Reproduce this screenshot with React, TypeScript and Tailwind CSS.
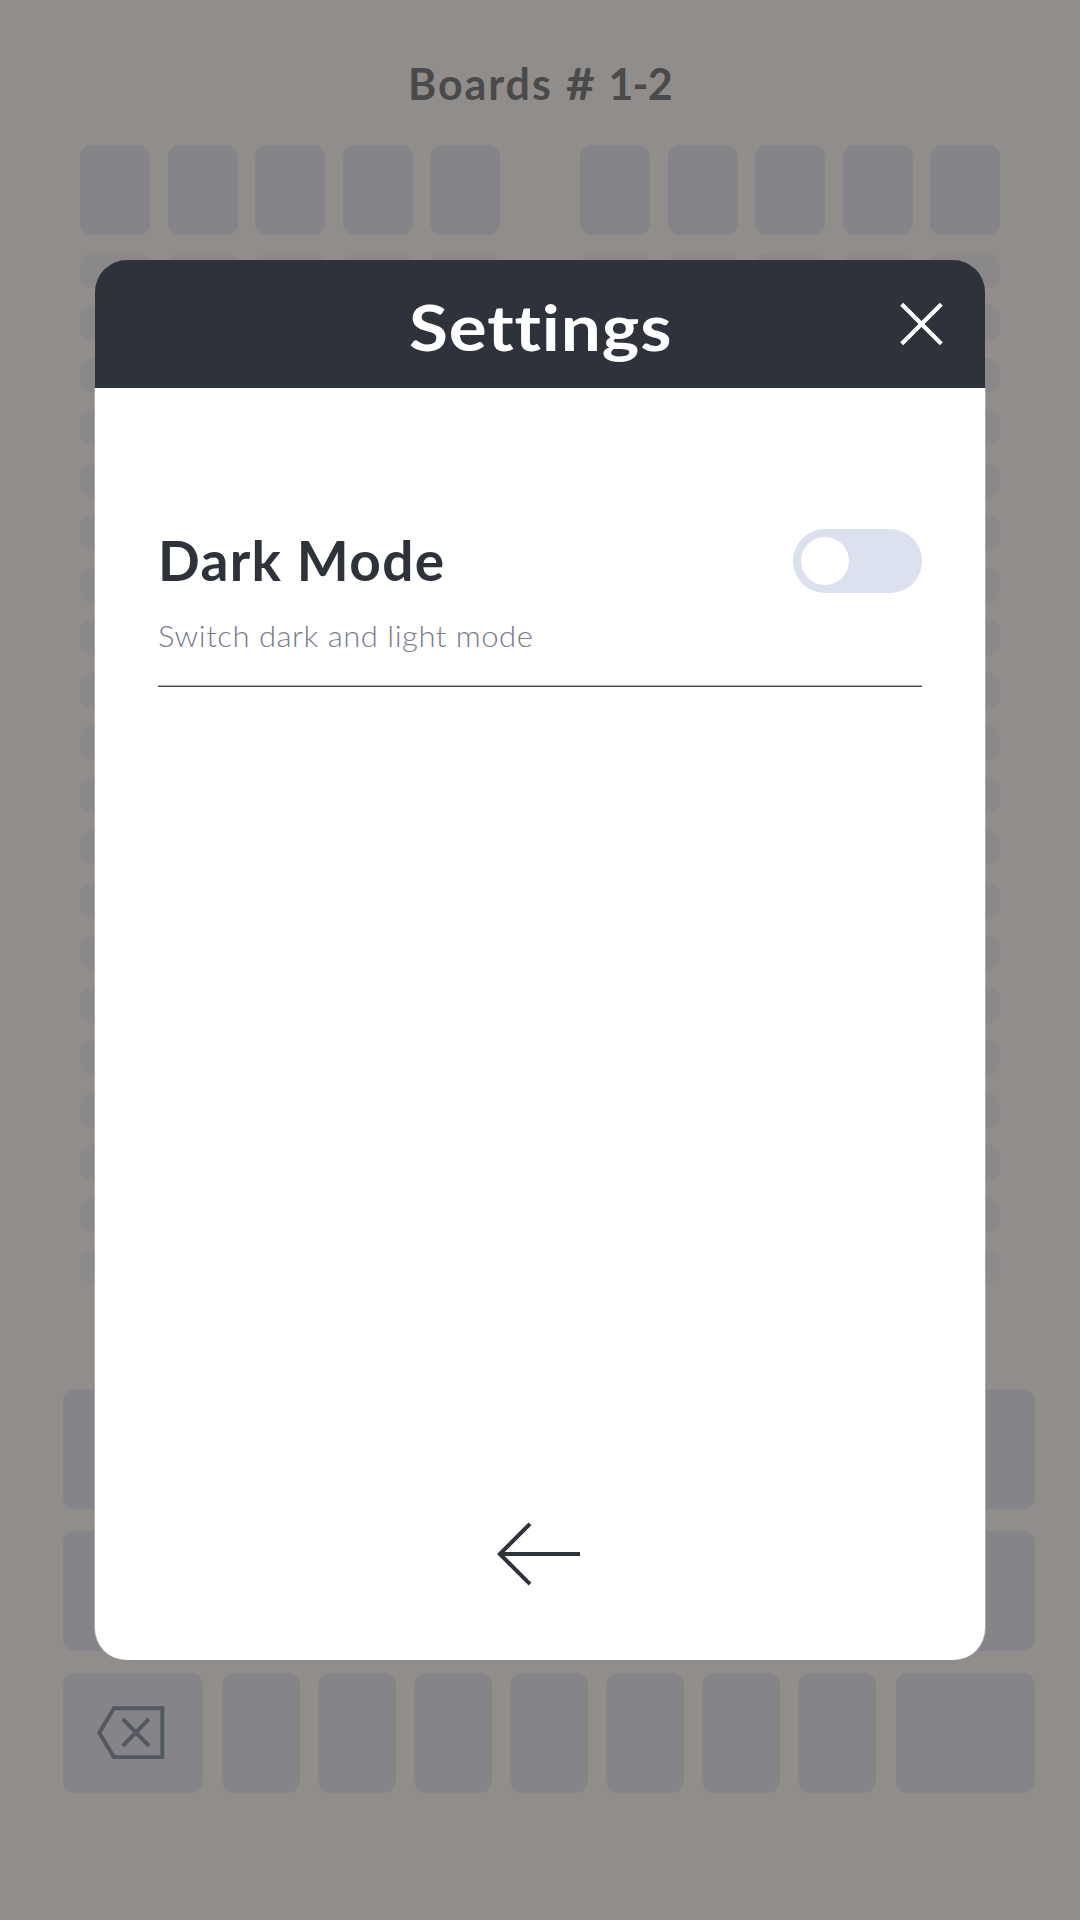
const boards = [0, 1];
const columns = Array.from({ length: 5 }, (_, i) => i);
const queuedRows = Array.from({ length: 20 }, (_, i) => i);
const letters = Array.from({ length: 10 }, (_, i) => i);
const bottomLetters = Array.from({ length: 7 }, (_, i) => i);

function Board() {
  return (
    <div className="flex w-[420px] flex-col gap-[17.5px]">
      <div className="flex gap-[17.5px]">
        {columns.map((c) => (
          <div key={c} className="h-[90px] w-[70px] shrink-0 rounded-xl bg-[#858489]" />
        ))}
      </div>
      {queuedRows.map((r) => (
        <div key={r} className="flex gap-[17.5px]">
          {columns.map((c) => (
            <div
              key={c}
              className={
                r === 19
                  ? "h-[35px] w-[70px] shrink-0 rounded-xl bg-linear-to-b from-[#8b8989] from-70% to-[#8d8b8a] to-75%"
                  : "h-[35px] w-[70px] shrink-0 rounded-xl bg-[#8a8889]"
              }
            />
          ))}
        </div>
      ))}
    </div>
  );
}

function BackspaceIcon() {
  return (
    <svg className="h-[53px] w-[68px]" viewBox="0 0 68 53" fill="none" stroke="#535961" strokeWidth="4">
      <path d="M2.3 26.8 17 2.2H65.3V51.2H17Z" />
      <path d="M25.8 13 52 39.8M52 13 25.8 39.8" />
    </svg>
  );
}

function Keyboard() {
  return (
    <div className="flex flex-col gap-[21.75px]">
      {[0, 1].map((row) => (
        <div key={row} className="flex gap-[18px]">
          {letters.map((k) => (
            <div key={k} className="h-[120px] w-[81px] shrink-0 rounded-xl bg-[#858489]" />
          ))}
        </div>
      ))}
      <div className="flex gap-[19.5px]">
        <div className="flex h-[120px] w-[139.5px] shrink-0 items-center rounded-xl bg-[#858489] pl-[34px]">
          <BackspaceIcon />
        </div>
        <div className="flex gap-[18px]">
          {bottomLetters.map((k) => (
            <div key={k} className="h-[120px] w-[78px] shrink-0 rounded-xl bg-[#858489]" />
          ))}
        </div>
        <div className="h-[120px] w-[139.5px] shrink-0 rounded-xl bg-[#858489]" />
      </div>
    </div>
  );
}

function SettingsDialog() {
  return (
    <div className="absolute top-[260px] left-[94px] flex h-[1400px] w-[892px] flex-col">
      <header className="mx-px flex h-32 shrink-0 items-center rounded-t-[32px] bg-[#2e333b] pr-[41.5px] pl-[314px]">
        <h2 className="flex-1 origin-left scale-x-[1.11] pt-[6px] text-[64px] leading-none font-bold tracking-[0.8px] whitespace-nowrap text-white">
          Settings
        </h2>
        <button aria-label="Close">
          <svg className="h-11 w-11" viewBox="0 0 44 44" fill="none" stroke="#fff" strokeWidth="4.2">
            <path d="M1.7 2.2 41.3 41.8M41.3 2.2 1.7 41.8" />
          </svg>
        </button>
      </header>
      <div className="flex flex-1 flex-col rounded-b-[32px] border-x border-[#aaa7a6] bg-white px-[63px] pt-[141px]">
        <div className="flex justify-between">
          <h3 className="text-[55px] leading-[62px] font-bold tracking-[1.3px] whitespace-nowrap text-[#2e333b]">
            Dark Mode
          </h3>
          <button aria-label="Dark Mode" className="h-16 w-[129px] rounded-full bg-[#dce1ef] p-2">
            <span className="block h-12 w-12 rounded-full bg-white" />
          </button>
        </div>
        <p className="mt-[25px] origin-left scale-x-[1.07] text-[29px] leading-[36px] font-light tracking-[0.47px] whitespace-nowrap text-[#777b8b]">
          Switch dark and light mode
        </p>
        <div className="mt-[31px] h-0.5 shrink-0 border-t border-[#b0b0b2] bg-[#46474b]" />
        <button aria-label="Back" className="mx-auto mt-[834px] pr-0.5">
          <svg className="h-[66px] w-[84px]" viewBox="0 0 84 66" fill="none" stroke="#2e333b" strokeWidth="4">
            <path d="M83 33H2.8M33 2.8 2.8 33 33 63.2" />
          </svg>
        </button>
      </div>
    </div>
  );
}

export default function App() {
  return (
    <main className="relative flex h-[1920px] w-[1080px] flex-col overflow-hidden bg-[#918d8b] font-['Lato','Noto_Sans',sans-serif]">
      <h1 className="flex h-[145px] shrink-0 gap-[13px] pt-[58px] pl-[408px] text-[43px] leading-[52px] font-bold tracking-[1.9px] whitespace-nowrap text-[#4a4a4a]">
        <span>Boards</span>
        <span className="origin-left scale-x-[1.15]">#</span>
        <span className="ml-[3px] tracking-[-0.9px]">1-2</span>
      </h1>
      <div className="flex h-[1244px] shrink-0 justify-between px-20">
        {boards.map((b) => (
          <Board key={b} />
        ))}
      </div>
      <div className="px-[63px]">
        <Keyboard />
      </div>
      <SettingsDialog />
    </main>
  );
}
